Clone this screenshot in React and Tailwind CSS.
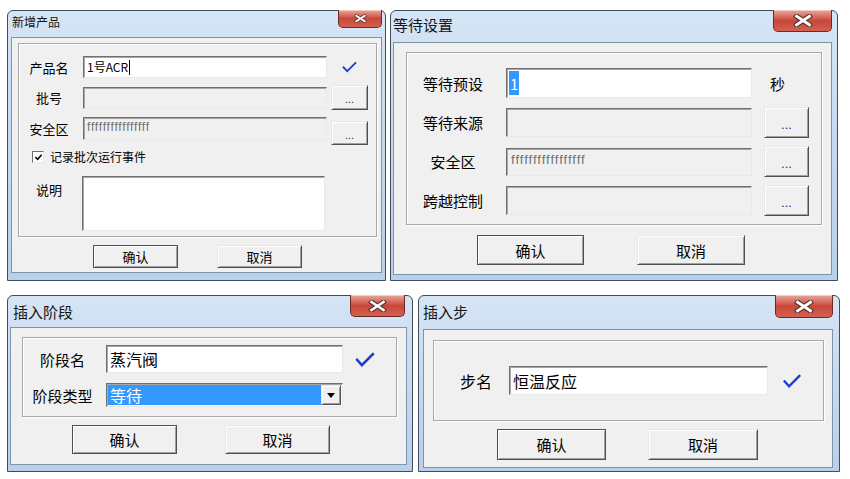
import React from 'react'

const cjk = "font-['Noto_Sans_CJK_SC','Noto_Sans',sans-serif]"

function CloseX({ className, xCls }) {
  return (
    <div className={`-mt-px flex items-center justify-center rounded-b-[5px] border border-t-0 border-[#6b2a22] bg-linear-to-b from-[#e8a89d] via-[#c8473a] to-[#d2604f] shadow-[inset_0_1px_0_#f4c9c0] ${className}`}>
      <svg viewBox="0 0 14 9" className={xCls}>
        <path d="M2.5 1.5 L11.5 7.5 M11.5 1.5 L2.5 7.5" stroke="#5b3530" strokeWidth="3.6" strokeLinecap="square" />
        <path d="M2.5 1.5 L11.5 7.5 M11.5 1.5 L2.5 7.5" stroke="#ffffff" strokeWidth="2" strokeLinecap="square" />
      </svg>
    </div>
  )
}

function Win({ title, className, bar, titleCls, close, xCls, client, children }) {
  return (
    <div className={`flex flex-col rounded-t-[6px] border border-[#3f4d5c] bg-linear-to-b from-[#d6e5f5] via-[#c5d9ef] to-[#b9d0ea] ${className}`}>
      <div className={`flex justify-between ${bar}`}>
        <span className={`${cjk} leading-none text-[#141414] ${titleCls}`}>{title}</span>
        <CloseX className={close} xCls={xCls} />
      </div>
      <div className={`flex flex-1 flex-col border border-[#7f93aa] bg-[#f0f0f0] ${client}`}>{children}</div>
    </div>
  )
}

function Group({ className, children }) {
  return (
    <div className={`flex flex-col border border-[#a8a8a8] shadow-[inset_1px_1px_0_#fff,1px_1px_0_#fff] ${className}`}>
      {children}
    </div>
  )
}

function Field({ className, white, children }) {
  return (
    <div className={`flex items-center overflow-hidden border border-t-[#6f6f6f] border-l-[#6f6f6f] border-r-[#e8e8e8] border-b-[#e8e8e8] shadow-[inset_1px_1px_0_#a8a8a8] ${white ? 'bg-white' : 'bg-[#f0f0f0]'} ${className}`}>
      {children}
    </div>
  )
}

function Btn({ className, def, children }) {
  return (
    <div className={`flex items-center justify-center border ${def ? 'border-[#4f4f4f]' : 'border-t-[#e8e8e8] border-l-[#e8e8e8] border-r-[#4f4f4f] border-b-[#4f4f4f]'} bg-[#f0f0f0] shadow-[inset_1px_1px_0_#fff,inset_-1px_-1px_0_#a0a0a0] ${cjk} leading-none text-black ${className}`}>
      {children}
    </div>
  )
}

function Dots({ className }) {
  return <span className={`font-['Liberation_Sans',sans-serif] leading-none text-[#1b2b66] ${className}`}>...</span>
}

function Check({ className }) {
  return (
    <svg viewBox="0 0 16 12" className={className}>
      <path d="M1 5.5 L5.5 10.5 L15 1" fill="none" stroke="#1f3bd1" strokeWidth="2" />
    </svg>
  )
}

function Fs({ n, className }) {
  return (
    <span className={`font-['Liberation_Sans',sans-serif] leading-none text-[#707070] ${className}`}>{'f'.repeat(n)}</span>
  )
}

function NewProduct() {
  const label = `${cjk} w-[48px] text-center text-[13px] leading-none text-black`
  return (
    <Win
      title="新增产品"
      className="w-[379px] h-[271px]"
      bar="h-[26px] pl-[4px] pr-[3px]"
      titleCls="text-[12px] mt-[5px]"
      close="w-[44px] h-[18px]"
      xCls="w-[13px] h-[9px]"
      client="mx-[3px] mb-[7px] pt-[5px] pl-[6px]"
    >
      <Group className="w-[359px] h-[194px] pt-[12px] pl-[6px]">
        <div className="flex h-[22px] items-center">
          <span className={label}>产品名</span>
          <Field white className="ml-[10px] w-[244px] h-[22px] pl-[3px]">
            <span className={`${cjk} text-[12px] leading-none text-black`}>1号ACR</span>
            <span className="ml-px h-[15px] w-px bg-black" />
          </Field>
          <div className="ml-[4px] flex w-[37px] justify-center">
            <Check className="w-[15px] h-[12px]" />
          </div>
        </div>
        <div className="mt-[7px] flex h-[25px] items-center">
          <span className={label}>批号</span>
          <Field className="ml-[10px] w-[244px] h-[22px]" />
          <Btn className="ml-[4px] w-[37px] h-[25px]">
            <Dots className="text-[11px] mt-[4px]" />
          </Btn>
        </div>
        <div className="mt-[7px] flex h-[28px]">
          <div className="flex h-[23px] items-center">
            <span className={label}>安全区</span>
          </div>
          <Field className="ml-[10px] w-[244px] h-[23px] items-start pl-[3px] pt-[3px]">
            <Fs n={16} className="text-[12px] tracking-[0.8px]" />
          </Field>
          <Btn className="ml-[4px] mt-[4px] w-[37px] h-[24px]">
            <Dots className="text-[11px] mt-[4px]" />
          </Btn>
        </div>
        <div className="mt-[6px] flex h-[12px] items-center pl-[7px]">
          <div className="flex h-[12px] w-[12px] items-center justify-center border border-t-[#6f6f6f] border-l-[#6f6f6f] border-r-[#e8e8e8] border-b-[#e8e8e8] bg-white">
            <svg viewBox="0 0 10 10" className="w-[9px] h-[9px]">
              <path d="M1.5 4.5 L4 7 L8.5 2" fill="none" stroke="#000" strokeWidth="1.8" />
            </svg>
          </div>
          <span className={`${cjk} ml-[6px] text-[12px] leading-none text-black`}>记录批次运行事件</span>
        </div>
        <div className="mt-[13px] flex items-start">
          <span className={`${label} mt-[7px]`}>说明</span>
          <Field white className="ml-[9px] w-[243px] h-[55px]" />
        </div>
      </Group>
      <div className="mt-[8px] flex">
        <Btn def className="ml-[75px] w-[85px] h-[23px] text-[13px]">确认</Btn>
        <Btn className="ml-[39px] w-[85px] h-[23px] text-[13px]">取消</Btn>
      </div>
    </Win>
  )
}

function WaitSettings() {
  const label = `${cjk} w-[76px] text-center text-[15px] leading-none text-black`
  const rows = [
    { name: '等待来源', h: 'h-[29px]', mt: 'mt-[9px]' },
    { name: '安全区', h: 'h-[28px]', mt: 'mt-[8px]', fs: true },
    { name: '跨越控制', h: 'h-[29px]', mt: 'mt-[8px]' },
  ]
  return (
    <Win
      title="等待设置"
      className="w-[448px] h-[271px]"
      bar="h-[31px] pl-[2px] pr-[5px]"
      titleCls="text-[15px] mt-[6px]"
      close="w-[59px] h-[22px]"
      xCls="w-[20px] h-[13px]"
      client="ml-[2px] mr-[5px] mb-[5px] pt-[9px] pl-[12px]"
    >
      <Group className="w-[416px] h-[173px] pt-[15px] pl-[8px]">
        <div className="flex h-[30px] items-center">
          <span className={label}>等待预设</span>
          <Field white className="ml-[15px] w-[246px] h-[30px] pl-[2px]">
            <span className={`${cjk} flex h-[24px] items-center bg-[#3399ff] px-px text-[15px] leading-none text-white`}>1</span>
          </Field>
          <span className={`${cjk} ml-[18px] text-[15px] leading-none text-black`}>秒</span>
        </div>
        {rows.map((r) => (
          <div key={r.name} className={`${r.mt} flex h-[31px] items-center`}>
            <span className={label}>{r.name}</span>
            <Field className={`ml-[15px] w-[246px] ${r.h} items-start pl-[4px] pt-[4px]`}>
              {r.fs && <Fs n={17} className="text-[13px] tracking-[1px]" />}
            </Field>
            <Btn className="ml-[12px] w-[45px] h-[31px]">
              <Dots className="text-[13px] mt-[4px]" />
            </Btn>
          </div>
        ))}
      </Group>
      <div className="mt-[10px] flex">
        <Btn def className="ml-[71px] w-[107px] h-[30px] text-[15px]">确认</Btn>
        <Btn className="ml-[53px] w-[108px] h-[30px] text-[15px]">取消</Btn>
      </div>
    </Win>
  )
}

function InsertPhase() {
  const label = `${cjk} w-[65px] text-center text-[15px] leading-none text-black`
  return (
    <Win
      title="插入阶段"
      className="w-[406px] h-[177px]"
      bar="h-[31px] pl-[5px] pr-[7px]"
      titleCls="text-[15px] mt-[8px]"
      close="w-[55px] h-[22px]"
      xCls="w-[19px] h-[12px]"
      client="ml-[2px] mr-[5px] mb-[6px] pt-[9px] pl-[11px]"
    >
      <Group className="w-[375px] h-[80px] pt-[7px] pl-[7px]">
        <div className="flex h-[28px] items-center">
          <span className={label}>阶段名</span>
          <Field white className="ml-[11px] w-[237px] h-[28px] pl-[3px]">
            <span className={`${cjk} text-[16px] leading-none text-black`}>蒸汽阀</span>
          </Field>
          <Check className="ml-[12px] w-[20px] h-[15px]" />
        </div>
        <div className="mt-[10px] flex h-[24px] items-center">
          <span className={label}>阶段类型</span>
          <Field white className="ml-[11px] w-[237px] h-[24px] items-stretch p-px">
            <div className="flex flex-1 items-center bg-[#3399ff] pl-[2px]">
              <span className={`${cjk} text-[16px] leading-none text-white`}>等待</span>
            </div>
            <Btn className="w-[20px]">
              <svg viewBox="0 0 8 5" className="w-[8px] h-[5px]">
                <path d="M0 0 L8 0 L4 5 Z" fill="#000" />
              </svg>
            </Btn>
          </Field>
        </div>
      </Group>
      <div className="mt-[8px] flex">
        <Btn def className="ml-[50px] w-[105px] h-[29px] text-[15px]">确认</Btn>
        <Btn className="ml-[48px] w-[105px] h-[29px] text-[15px]">取消</Btn>
      </div>
    </Win>
  )
}

function InsertStep() {
  return (
    <Win
      title="插入步"
      className="w-[422px] h-[177px]"
      bar="h-[33px] pl-[4px] pr-[6px]"
      titleCls="text-[15px] mt-[8px]"
      close="w-[58px] h-[23px]"
      xCls="w-[20px] h-[13px]"
      client="ml-[4px] mr-[6px] mb-[3px] pt-[10px] pl-[9px]"
    >
      <Group className="w-[391px] h-[81px] pt-[25px] pl-[26px]">
        <div className="flex h-[29px] items-center">
          <span className={`${cjk} w-[32px] text-center text-[16px] leading-none text-black`}>步名</span>
          <Field white className="ml-[17px] w-[259px] h-[29px] pl-[3px]">
            <span className={`${cjk} text-[16px] leading-none text-black`}>恒温反应</span>
          </Field>
          <Check className="ml-[14px] w-[20px] h-[14px]" />
        </div>
      </Group>
      <div className="mt-[8px] flex">
        <Btn def className="ml-[64px] w-[109px] h-[31px] text-[15px]">确认</Btn>
        <Btn className="ml-[42px] w-[110px] h-[31px] text-[15px]">取消</Btn>
      </div>
    </Win>
  )
}

export default function App() {
  return (
    <div className="h-[479px] w-[850px] overflow-hidden bg-white pl-[7px] pt-[10px]">
      <div className="flex items-start gap-[4px]">
        <NewProduct />
        <WaitSettings />
      </div>
      <div className="mt-[14px] flex items-start gap-[5px]">
        <InsertPhase />
        <InsertStep />
      </div>
    </div>
  )
}
